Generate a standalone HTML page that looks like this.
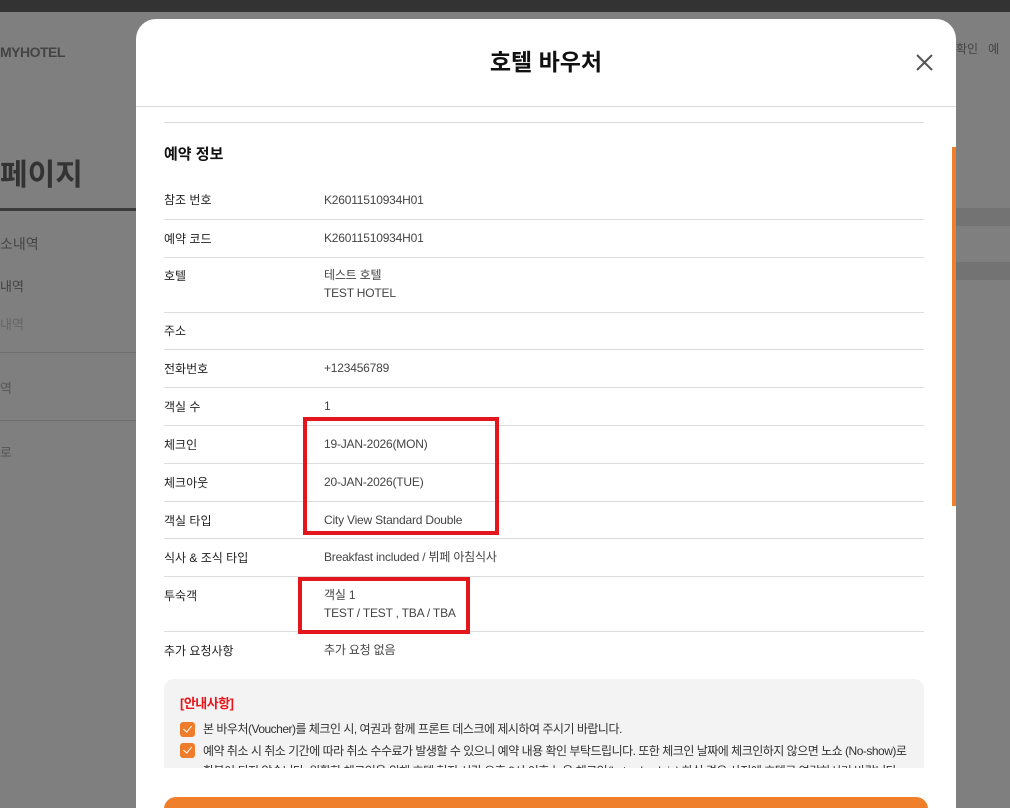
<!DOCTYPE html>
<html><head><meta charset="utf-8"><style>
*{margin:0;padding:0;box-sizing:border-box}
html,body{width:1010px;height:808px;overflow:hidden}
body{background:#7f7f7f;font-family:"Liberation Sans","Noto Sans CJK KR",sans-serif;position:relative}
.top{position:absolute;left:0;top:0;width:1010px;height:12px;background:#333}
.bg{position:absolute;color:#3a3a3a}
.modal{position:absolute;left:136px;top:19px;width:820px;height:789px;background:#fff;border-radius:20px 20px 0 0;overflow:hidden}
.hd{height:88px;border-bottom:1px solid #ddd;text-align:center;font-size:23px;font-weight:bold;line-height:86px;color:#111}
.x{position:absolute;left:780px;top:35px}
.row{position:absolute;left:28px;width:760px;border-top:1px solid #ddd;font-size:12px;color:#222}
.row span{position:absolute;left:0}
.row b{position:absolute;left:160px;font-weight:normal;color:#444;line-height:18px;letter-spacing:-.2px}
.red{position:absolute;border:4px solid #e3161b}
.chk{display:inline-block;width:15px;height:15px;background:#ef7c2a;border-radius:3px;vertical-align:middle;margin-right:8px;position:relative}
.chk:after{content:"";position:absolute;left:5px;top:2px;width:4px;height:7px;border:solid #fff;border-width:0 1.5px 1.5px 0;transform:rotate(40deg)}
</style></head><body>
<div class="top"></div>
<div class="bg" style="left:0;top:44px;font-size:14px;font-weight:bold;color:#444;letter-spacing:-.5px">MYHOTEL</div>
<div class="bg" style="left:0;top:150px;font-size:30px;font-weight:bold;color:#333">페이지</div>
<div class="bg" style="left:0;top:208px;width:136px;height:3px;background:#3a3a3a"></div>
<div class="bg" style="left:0;top:234px;font-size:14px;color:#444">소내역</div>
<div class="bg" style="left:0;top:276px;font-size:13px;color:#444">내역</div>
<div class="bg" style="left:0;top:314px;font-size:13px;color:#666">내역</div>
<div class="bg" style="left:0;top:352px;width:136px;height:1px;background:#6e6e6e"></div>
<div class="bg" style="left:0;top:378px;font-size:13px;color:#555">역</div>
<div class="bg" style="left:0;top:420px;width:136px;height:1px;background:#6e6e6e"></div>
<div class="bg" style="left:0;top:442px;font-size:13px;color:#555">로</div>
<div class="bg" style="left:956px;top:40px;font-size:12px;color:#444">확인 &nbsp; 예</div>
<div class="bg" style="left:956px;top:208px;width:54px;height:18px;background:#737373"></div>
<div class="bg" style="left:956px;top:262px;width:54px;height:18px;background:#737373"></div>
<div class="modal">
<div class="hd">호텔 바우처</div>
<svg class="x" width="17" height="17" viewBox="0 0 17 17"><path d="M1 1L16 16M16 1L1 16" stroke="#555" stroke-width="2"/></svg>
<div style="position:absolute;left:28px;top:103px;width:760px;border-top:1px solid #ddd"></div>
<div style="position:absolute;left:28px;top:124px;font-size:15px;font-weight:bold;color:#111">예약 정보</div>
<div class="row" style="top:172px;border:none"><span>참조 번호</span><b>K26011510934H01</b></div>
<div class="row" style="top:200px;height:38px"><span style="top:10px">예약 코드</span><b style="top:9px">K26011510934H01</b></div>
<div class="row" style="top:238px;height:55px"><span style="top:9px">호텔</span><b style="top:8px">테스트 호텔<br>TEST HOTEL</b></div>
<div class="row" style="top:293px;height:37px"><span style="top:9px">주소</span></div>
<div class="row" style="top:330px;height:38px"><span style="top:10px">전화번호</span><b style="top:9px">+123456789</b></div>
<div class="row" style="top:368px;height:38px"><span style="top:10px">객실 수</span><b style="top:9px">1</b></div>
<div class="row" style="top:406px;height:38px"><span style="top:10px">체크인</span><b style="top:9px">19-JAN-2026(MON)</b></div>
<div class="row" style="top:444px;height:38px"><span style="top:10px">체크아웃</span><b style="top:9px">20-JAN-2026(TUE)</b></div>
<div class="row" style="top:482px;height:37px"><span style="top:10px">객실 타입</span><b style="top:9px">City View Standard Double</b></div>
<div class="row" style="top:519px;height:38px"><span style="top:10px">식사 &amp; 조식 타입</span><b style="top:9px">Breakfast included / 뷔페 아침식사</b></div>
<div class="row" style="top:557px;height:55px"><span style="top:10px">투숙객</span><b style="top:9px">객실 1<br>TEST / TEST , TBA / TBA</b></div>
<div class="row" style="top:612px;height:38px"><span style="top:10px">추가 요청사항</span><b style="top:9px">추가 요청 없음</b></div>
<div style="position:absolute;left:28px;top:660px;width:760px;height:89px;background:#f3f3f3;border-radius:10px 10px 0 0;overflow:hidden;font-size:12px;color:#333;padding:14px 16px;letter-spacing:-.5px">
<div style="color:#e8141a;font-weight:bold;font-size:13px;margin-bottom:8px">[안내사항]</div>
<div style="margin-bottom:4px"><i class="chk"></i>본 바우처(Voucher)를 체크인 시, 여권과 함께 프론트 데스크에 제시하여 주시기 바랍니다.</div>
<div style="display:flex;line-height:20px"><i class="chk" style="flex:none;margin-top:2px"></i><div>예약 취소 시 취소 기간에 따라 취소 수수료가 발생할 수 있으니 예약 내용 확인 부탁드립니다. 또한 체크인 날짜에 체크인하지 않으면 노쇼 (No-show)로 환불이 되지 않습니다. 원활한 체크인을 위해 호텔 현지 시간 오후 9시 이후 늦은 체크인(Late check-in) 하실 경우 사전에 호텔로 연락하시기 바랍니다.</div></div>
</div>
<div style="position:absolute;left:28px;top:778px;width:764px;height:40px;background:#ef7f2b;border-radius:12px"></div>
<div style="position:absolute;left:816px;top:128px;width:4px;height:359px;background:#ef7f2b"></div>
</div>
<div class="red" style="left:303px;top:417px;width:196px;height:118px"></div>
<div class="red" style="left:298px;top:577px;width:172px;height:57px"></div>
</body></html>
